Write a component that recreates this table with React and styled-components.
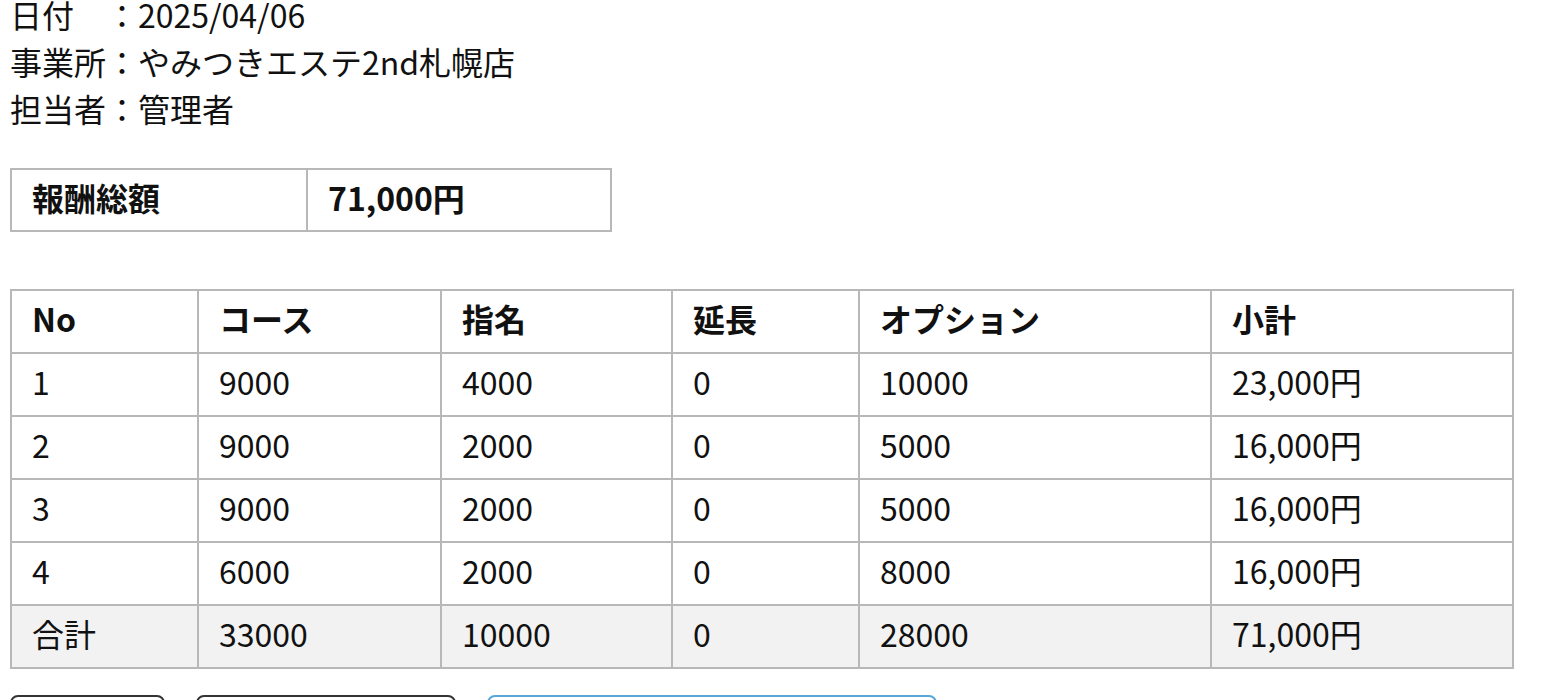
import React from "react";
import styled, { createGlobalStyle } from "styled-components";

const GlobalStyle = createGlobalStyle`
  html, body {
    margin: 0;
    padding: 0;
    background: #ffffff;
  }
  body {
    font-family: "Noto Sans CJK JP", "Noto Sans", sans-serif;
    color: #111;
  }
`;

const Page = styled.div`
  padding: 0 10px;
  margin-top: -9px;
  font-size: 32px;
`;

const Info = styled.div`
  display: flex;
  flex-direction: column;
  line-height: 47px;
`;

const InfoLine = styled.div`
  white-space: pre;
`;

const SummaryTable = styled.table`
  margin-top: 36px;
  border-collapse: collapse;
  table-layout: fixed;
  width: 600px;
`;

const Cell = styled.td`
  border: 2px solid #b8b8b8;
  padding: 5px 20px ${(p) => (p.$compact ? 10 : 11)}px;
  line-height: 45px;
  font-weight: ${(p) => (p.$bold ? 700 : 400)};
  background: ${(p) => (p.$shade ? "#f2f2f2" : "transparent")};
  white-space: nowrap;
`;

const HeadCell = styled.th`
  border: 2px solid #b8b8b8;
  padding: 5px 20px 11px;
  line-height: 45px;
  font-weight: 700;
  text-align: left;
  white-space: nowrap;
`;

const DataTable = styled.table`
  margin-top: 57px;
  border-collapse: collapse;
  table-layout: fixed;
  width: 1502px;
`;

const Buttons = styled.div`
  display: flex;
  gap: 31px;
  margin-top: 26px;
`;

const Button = styled.button`
  width: ${(p) => p.$w}px;
  height: 56px;
  border: 2px solid ${(p) => (p.$primary ? "#57a8d8" : "#333")};
  border-radius: 8px;
  background: #fff;
  font-family: inherit;
  font-size: 28px;
  color: ${(p) => (p.$primary ? "#57a8d8" : "#333")};
`;

const cols = [187, 243, 231, 187, 352, 302];
const headers = ["No", "コース", "指名", "延長", "オプション", "小計"];
const rows = [
  ["1", "9000", "4000", "0", "10000", "23,000円"],
  ["2", "9000", "2000", "0", "5000", "16,000円"],
  ["3", "9000", "2000", "0", "5000", "16,000円"],
  ["4", "6000", "2000", "0", "8000", "16,000円"],
];
const total = ["合計", "33000", "10000", "0", "28000", "71,000円"];

export default function App() {
  return (
    <>
      <GlobalStyle />
      <Page>
        <Info>
          <InfoLine>日付　：2025/04/06</InfoLine>
          <InfoLine>事業所：やみつきエステ2nd札幌店</InfoLine>
          <InfoLine>担当者：管理者</InfoLine>
        </Info>

        <SummaryTable>
          <colgroup>
            <col style={{ width: 296 }} />
            <col style={{ width: 304 }} />
          </colgroup>
          <tbody>
            <tr>
              <Cell $bold $compact>報酬総額</Cell>
              <Cell $bold $compact>71,000円</Cell>
            </tr>
          </tbody>
        </SummaryTable>

        <DataTable>
          <colgroup>
            {cols.map((w, i) => (
              <col key={i} style={{ width: w }} />
            ))}
          </colgroup>
          <thead>
            <tr>
              {headers.map((h) => (
                <HeadCell key={h}>{h}</HeadCell>
              ))}
            </tr>
          </thead>
          <tbody>
            {rows.map((r, i) => (
              <tr key={i}>
                {r.map((v, j) => (
                  <Cell key={j}>{v}</Cell>
                ))}
              </tr>
            ))}
            <tr>
              {total.map((v, j) => (
                <Cell key={j} $shade>{v}</Cell>
              ))}
            </tr>
          </tbody>
        </DataTable>

        <Buttons>
          <Button $w={155}>戻る</Button>
          <Button $w={260}>CSV出力</Button>
          <Button $w={450} $primary>PDFダウンロード</Button>
        </Buttons>
      </Page>
    </>
  );
}
